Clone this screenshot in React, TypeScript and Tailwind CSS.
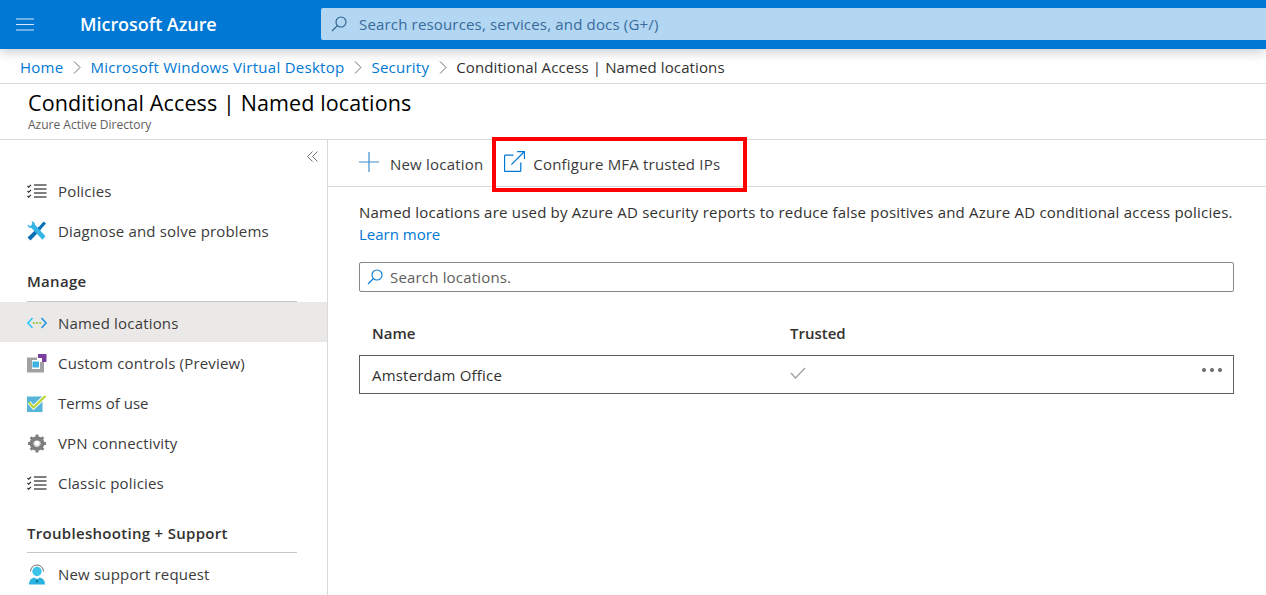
import React from "react";

const Checklist = () => (
  <svg width="20" height="15" viewBox="0 0 20 15" fill="none">
    <path d="M0.500 2l1.200 1.200L4 0.800M0.500 7l1.200 1.200L4 5.800M0.500 12l1.200 1.200L4 10.800" stroke="#2b2b2b" strokeWidth="1.100" />
    <path d="M7 1h12.500M7 5h12.500M7 9h12.500M7 13h12.500" stroke="#555555" strokeWidth="1.500" />
  </svg>
);

const Wrench = () => (
  <svg width="20" height="20" viewBox="0 0 20 20">
    <path d="M0.500 16.500L12 5.500l2.500 2.500L3.500 19.500z" fill="#0a6fb5" />
    <path d="M11.500 6.500L16.500 0.500l2.500 2-5 5.500z" fill="#0a6fb5" />
    <path d="M4.500 0.500c2-.3 3.500 1.200 3.500 3.200l10.500 11.500-3 3.500L4.500 7C2.500 7.500 .3 5.500 .7 3.300l2.500 2 2.200-2.200z" fill="#35b4e6" />
  </svg>
);

const NamedLoc = () => (
  <svg width="20" height="12" viewBox="0 0 20 12" fill="none">
    <path d="M5.500 1L1 6l4.500 5" stroke="#36c8f5" strokeWidth="1.700" />
    <path d="M14.500 1L19 6l-4.500 5" stroke="#2a9ae0" strokeWidth="1.700" />
    <circle cx="6.800" cy="6" r="1.100" fill="#8cc63f" />
    <circle cx="10" cy="6" r="1.100" fill="#8cc63f" />
    <circle cx="13.200" cy="6" r="1.100" fill="#8cc63f" />
  </svg>
);

const CustomCtl = () => (
  <svg width="20" height="19" viewBox="0 0 20 19">
    <path d="M0 3.500H10V6H5V15H13V8H17V18.500H0Z" fill="#a0a1a2" />
    <path d="M11 0H19.500V8H15V4H11Z" fill="#773f9b" />
    <rect x="5.500" y="7.500" width="6.500" height="6" fill="#3fb1de" />
  </svg>
);

const Terms = () => (
  <svg width="20" height="17" viewBox="0 0 20 17">
    <rect x="0" y="1.500" width="15.500" height="15.500" fill="#59b4d9" />
    <path d="M2 7.500l4.500 5L18.500 1" fill="none" stroke="#ffffff" strokeWidth="4" />
    <path d="M2 7.500l4.500 5L18.500 1" fill="none" stroke="#b8d432" strokeWidth="2.200" />
  </svg>
);

const Gear = () => (
  <svg width="20" height="19" viewBox="0 0 20 20">
    <circle cx="10" cy="10" r="5.500" fill="none" stroke="#7f7f7f" strokeWidth="4.500" />
    <path d="M10 0.500v4M10 15.500v4M0.500 10h4M15.500 10h4M3.300 3.300l2.800 2.800M13.900 13.900l2.800 2.800M16.700 3.300l-2.800 2.800M6.100 13.900l-2.800 2.800" stroke="#7f7f7f" strokeWidth="3" />
    <path d="M7.300 8a3.200 3.200 0 1 0 5.400 0" fill="none" stroke="#d0d0d0" strokeWidth="1.300" />
  </svg>
);

const Support = () => (
  <svg width="20" height="21" viewBox="0 0 20 21">
    <path d="M3.500 7.500a6.500 6.500 0 0 1 13 0" fill="none" stroke="#6f6f6f" strokeWidth="1" />
    <circle cx="10" cy="7.500" r="4.700" fill="#3cc3ea" />
    <path d="M2 20.500c0-4.500 2.500-6.500 5.500-7l2.500 2 2.500-2c3 .5 5.500 2.500 5.500 7z" fill="#2cb4e0" />
    <path d="M9 15.500h2l.5 3h-3z" fill="#0a7fb0" />
  </svg>
);

const Item = ({ icon, label, active, low, tight }: { icon: React.ReactNode; label: string; active?: boolean; low?: boolean; tight?: boolean }) => (
  <div className={`flex h-10 items-center pl-[27px] ${low ? "pt-[2px]" : ""} ${active ? "bg-[#ebe9e8]" : ""}`}>
    <span className="flex w-[31px] shrink-0 items-center">{icon}</span>
    <span className={`text-[15px] text-[#3b3b3b] ${tight ? "tracking-[0px]" : "tracking-[0.18px]"}`}>{label}</span>
  </div>
);

const Section = ({ label, low }: { label: string; low?: boolean }) => (
  <div className={`ml-[27px] mr-[30px] flex h-[31px] items-start border-b border-[#c8c6c4] text-[15px] font-semibold leading-[20px] tracking-[0.3px] text-[#323130] ${low ? "pt-[1px]" : ""}`}>
    {label}
  </div>
);

const Chevron = () => (
  <svg width="8" height="13" viewBox="0 0 8 13" fill="none" className="mx-[9.5px]">
    <path d="M1 0.500l6 6-6 6" stroke="#707070" strokeWidth="1" />
  </svg>
);

const Mag = ({ color }: { color: string }) => (
  <svg width="16" height="16" viewBox="0 0 16 16" fill="none">
    <circle cx="10" cy="6" r="5" stroke={color} strokeWidth="1.100" />
    <path d="M6.500 9.500L1 15" stroke={color} strokeWidth="1.100" />
  </svg>
);

export default function App() {
  return (
    <div className="relative h-[595px] w-[1266px] overflow-hidden bg-white font-['Open_Sans','Noto_Sans',sans-serif]">
      <header className="relative z-10 flex h-[49px] items-center bg-[#0078d4] shadow-[0_4px_10px_rgba(0,0,0,0.18)]">
        <svg width="18" height="13" viewBox="0 0 18 13" className="ml-[16px]">
          <path d="M0 1h18M0 6.500h18M0 12h18" stroke="#d5e9f8" strokeWidth="1.200" />
        </svg>
        <span className="ml-[46px] w-[241px] text-[18px] font-semibold tracking-[-0.05px] text-white">Microsoft Azure</span>
        <div className="mb-[1px] flex h-8 flex-1 items-center rounded-l-[2px] bg-[#b3d6f2] pl-[10px]">
          <Mag color="#2a5f8f" />
          <span className="ml-[12px] text-[15px] tracking-[0.17px] text-[#376c9c]">Search resources, services, and docs (G+/)</span>
        </div>
      </header>

      <nav className="flex h-[35px] items-center border-b border-[#d9d9d9] pl-[20px] pt-[2px] text-[15px]">
        <span className="tracking-[0.25px] text-[#0078d4]">Home</span>
        <Chevron />
        <span className="tracking-[0.27px] text-[#0078d4]">Microsoft Windows Virtual Desktop</span>
        <Chevron />
        <span className="tracking-[0.25px] text-[#0078d4]">Security</span>
        <Chevron />
        <span className="tracking-[0.11px] text-[#323130]">Conditional Access | Named locations</span>
      </nav>

      <div className="h-[56px] border-b border-[#d9d9d9] pl-[28px] pt-[5px]">
        <div className="text-[21.5px] leading-[28px] tracking-[0.12px] text-black">Conditional Access | Named locations</div>
        <div className="mt-[1px] text-[12px] leading-[14px] text-[#605e5c]">Azure Active Directory</div>
      </div>

      <div className="flex h-[456px]">
        <aside className="w-[328px] shrink-0 border-r border-[#d9d9d9]">
          <div className="flex h-[31px] justify-end pr-[9px] pt-[11px]">
            <svg width="11" height="11" viewBox="0 0 11 11" fill="none">
              <path d="M5.500 0.500l-5 5 5 5M10.500 0.500l-5 5 5 5" stroke="#707070" strokeWidth="1" />
            </svg>
          </div>
          <Item icon={<Checklist />} label="Policies" />
          <Item icon={<Wrench />} label="Diagnose and solve problems" />
          <div className="h-[20px]" />
          <Section label="Manage" />
          <Item icon={<NamedLoc />} label="Named locations" active low />
          <Item icon={<CustomCtl />} label="Custom controls (Preview)" low />
          <Item icon={<Terms />} label="Terms of use" low tight />
          <Item icon={<Gear />} label="VPN connectivity" low />
          <Item icon={<Checklist />} label="Classic policies" low />
          <div className="h-[20px]" />
          <Section label="Troubleshooting + Support" low />
          <Item icon={<Support />} label="New support request" low />
        </aside>

        <main className="min-w-0 flex-1">
          <div className="flex h-[47px] items-center border-b border-[#d9d9d9] pl-[31px] pt-[2px] text-[15px] tracking-[0.2px] text-[#3b3b3b]">
            <svg width="20" height="20" viewBox="0 0 20 20" className="-mt-[5px] shrink-0">
              <path d="M10 0v20M0 10h20" stroke="#3f8fd0" strokeWidth="1.200" />
            </svg>
            <span className="ml-[11px]">New location</span>
            <svg width="21" height="21" viewBox="0 0 20 20" fill="none" className="-mt-[5px] ml-[21px] shrink-0">
              <path d="M9 4H1.500a1 1 0 0 0-1 1v13.500a1 1 0 0 0 1 1H15a1 1 0 0 0 1-1V11" stroke="#0078d4" strokeWidth="1.200" />
              <path d="M7 13L19.500 0.500M12.500 0.500h7v7" stroke="#0078d4" strokeWidth="1.200" />
            </svg>
            <span className="ml-[8px]">Configure MFA trusted IPs</span>
          </div>
          <div className="pl-[31px] pr-[32px]">
            <p className="mt-[14px] text-[15px] leading-[22px] tracking-[0.21px] text-[#323130]">
              Named locations are used by Azure AD security reports to reduce false positives and Azure AD conditional access policies.
              <br />
              <span className="tracking-[0px] text-[#0078d4]">Learn more</span>
            </p>
            <div className="mt-[17px] flex h-[30px] items-center rounded-[2px] border border-[#8a8886] pl-[7px]">
              <Mag color="#0078d4" />
              <span className="ml-[7px] text-[15px] tracking-[0.18px] text-[#605e5c]">Search locations.</span>
            </div>
            <div className="mt-[30px] flex h-[29px] items-start pl-[13px] text-[15px] font-semibold text-[#323130]">
              <span className="w-[418px]">Name</span>
              <span>Trusted</span>
            </div>
            <div className="mt-[4px] flex h-[39px] items-center border border-[#605e5c] pl-[12px] text-[15px] tracking-[0.2px] text-[#323130]">
              <span className="w-[418px] pt-[2px]">Amsterdam Office</span>
              <svg width="16" height="12" viewBox="0 0 16 12" fill="none" className="-mt-[4px]">
                <path d="M1 6l4.500 5L15 1" stroke="#a19f9d" strokeWidth="1.200" />
              </svg>
              <span className="-mt-[10px] ml-auto mr-[11px] flex gap-[4px]">
                <i className="h-[4px] w-[4px] rounded-full bg-[#6a6a6a]" />
                <i className="h-[4px] w-[4px] rounded-full bg-[#6a6a6a]" />
                <i className="h-[4px] w-[4px] rounded-full bg-[#6a6a6a]" />
              </span>
            </div>
          </div>
        </main>
      </div>

      <div className="absolute left-[492px] top-[137px] h-[55px] w-[255px] border-[4px] border-[#ff0000]" />
    </div>
  );
}
